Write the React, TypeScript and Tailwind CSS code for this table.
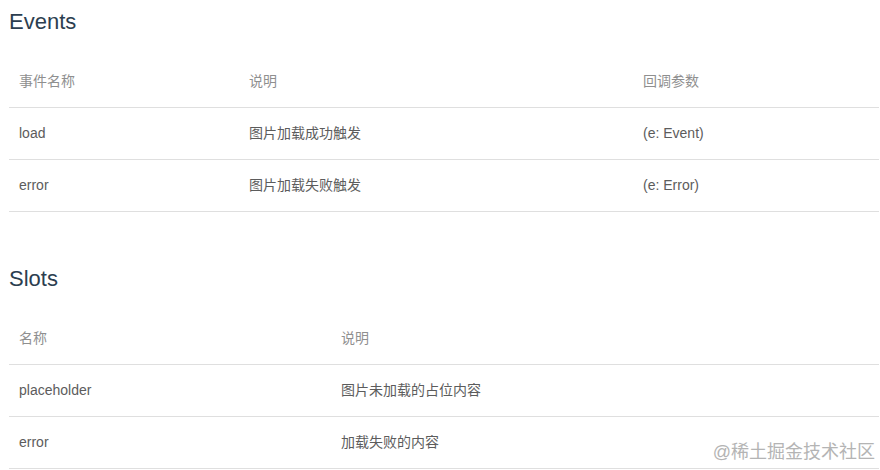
const FONT = "font-['Liberation_Sans','Noto_Sans_CJK_SC',sans-serif]";

const EVENTS = [
  { name: "load", desc: "图片加载成功触发", args: "(e: Event)" },
  { name: "error", desc: "图片加载失败触发", args: "(e: Error)" },
];

const SLOTS = [
  { name: "placeholder", desc: "图片未加载的占位内容" },
  { name: "error", desc: "加载失败的内容" },
];

function Row({ cells, widths, head }: { cells: string[]; widths: string[]; head?: boolean }) {
  return (
    <div className="flex h-[52px] items-center border-b border-[#dfdfdf]">
      {cells.map((c, i) => (
        <div
          key={i}
          className={`${widths[i]} px-[10px] text-[14px] ${head ? "text-[#8f8f8f]" : "text-[#5c5c5c]"}`}
        >
          {c}
        </div>
      ))}
    </div>
  );
}

export default function App() {
  const eventW = ["w-[230px] shrink-0", "w-[394px] shrink-0", "flex-1"];
  const slotW = ["w-[322px] shrink-0", "flex-1"];

  return (
    <div className={`relative w-[880px] h-[470px] overflow-hidden bg-white pl-[9px] pr-[1px] ${FONT}`}>
      <h2 className="h-[44px] leading-[44px] text-[22px] text-[#2c3e50]">Events</h2>
      <div className="mt-[12px]">
        <Row head cells={["事件名称", "说明", "回调参数"]} widths={eventW} />
        {EVENTS.map((e) => (
          <Row key={e.name} cells={[e.name, e.desc, e.args]} widths={eventW} />
        ))}
      </div>

      <h2 className="mt-[45px] h-[44px] leading-[44px] text-[22px] text-[#2c3e50]">Slots</h2>
      <div className="mt-[12px]">
        <Row head cells={["名称", "说明"]} widths={slotW} />
        {SLOTS.map((s) => (
          <Row key={s.name} cells={[s.name, s.desc]} widths={slotW} />
        ))}
      </div>

      {/* watermark */}
      <div className="absolute right-[5px] top-[440px] text-[18px] leading-[24px] text-[#b4b4b4]">
        @稀土掘金技术社区
      </div>
    </div>
  );
}
